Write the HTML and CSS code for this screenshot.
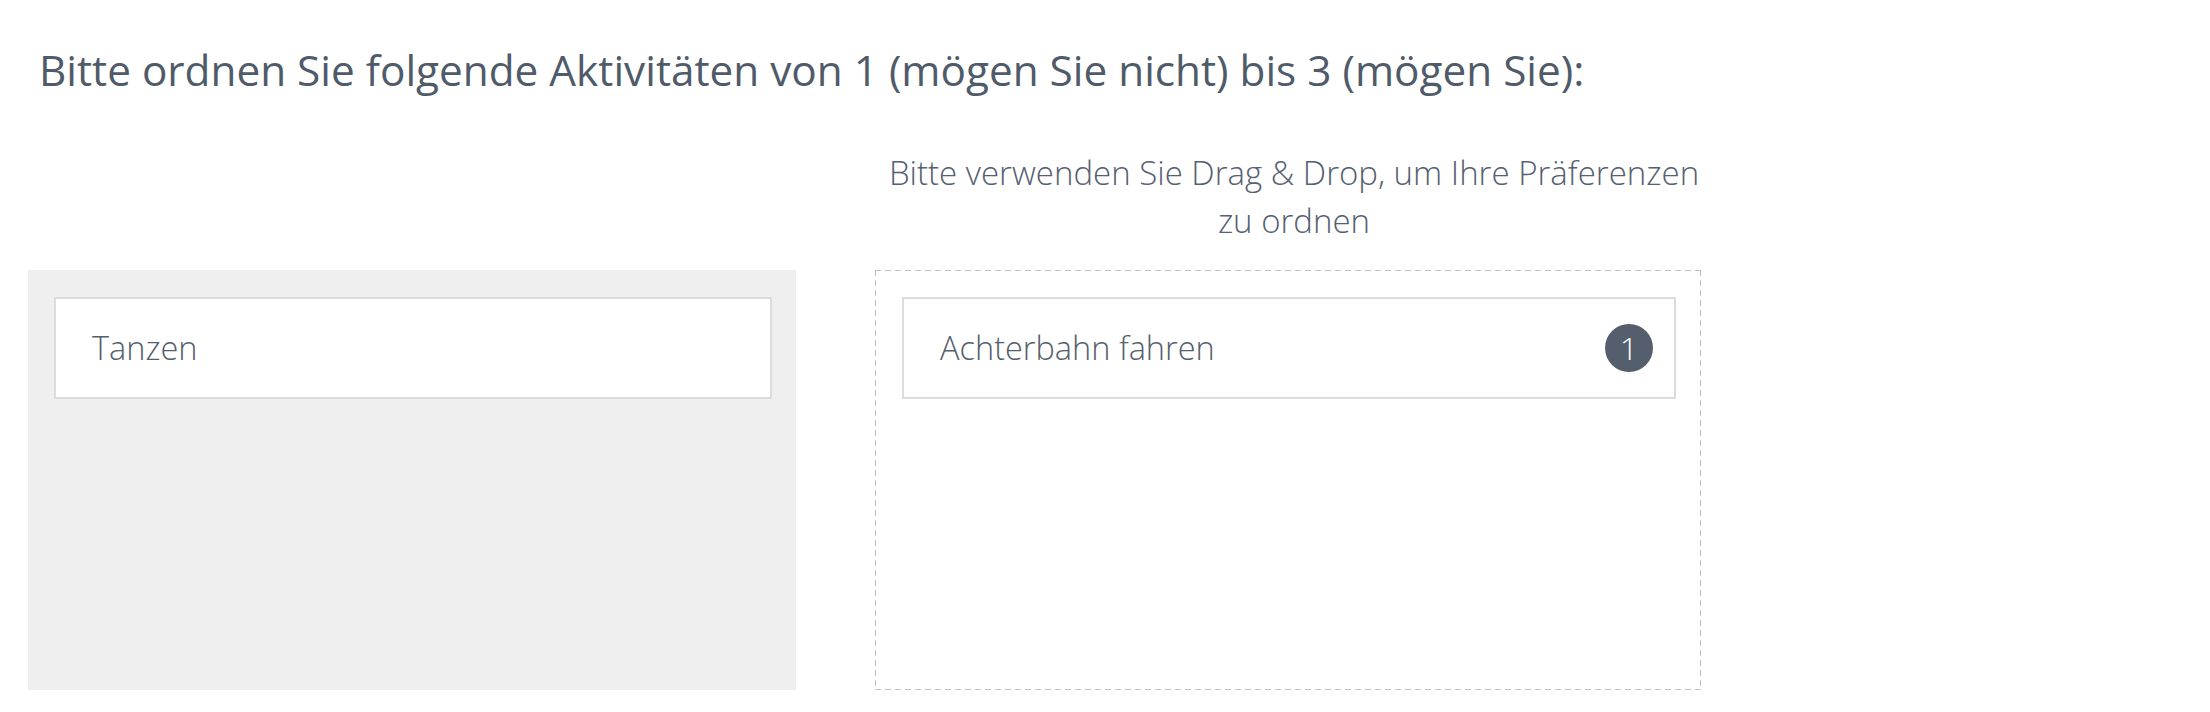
FILE: index.html
```html
<!DOCTYPE html>
<html lang="de">
<head>
<meta charset="utf-8">
<title>Ranking</title>
<link rel="stylesheet" href="styles.css">
</head>
<body>
<div class="page">
  <h1 class="question">Bitte ordnen Sie folgende Aktivitäten von 1 (mögen Sie nicht) bis 3 (mögen Sie):</h1>
  <div class="ranking">
    <div class="spacer"></div>
    <p class="hint">Bitte verwenden Sie Drag &amp; Drop, um Ihre Präferenzen zu ordnen</p>
    <div class="source">
      <div class="item"><span class="label">Tanzen</span></div>
    </div>
    <div class="target">
      <div class="item"><span class="label">Achterbahn fahren</span><span class="badge">1</span></div>
    </div>
  </div>
</div>
</body>
</html>
```

FILE: styles.css
```css
html, body {
  margin: 0;
  padding: 0;
  background: #ffffff;
}

body {
  font-family: "Open Sans", "Noto Sans", "Liberation Sans", sans-serif;
  color: #525c6b;
}

.page {
  padding: 0 28px;
}

.question {
  margin: 0;
  padding: 45px 0 0 11px;
  font-size: 42.3px;
  line-height: 50px;
  font-weight: 400;
  color: #505b6a;
}

.ranking {
  display: grid;
  grid-template-columns: 768px 826px;
  column-gap: 79px;
  margin-top: 54px;
}

.hint {
  margin: 0 0 25px;
  font-size: 33px;
  line-height: 48px;
  font-weight: 300;
  text-align: center;
  padding-left: 12px;
  color: #566071;
}

.source {
  background: #efefef;
  height: 420px;
  box-sizing: border-box;
  padding: 27px 24px 0 26px;
}

.target {
  height: 420px;
  box-sizing: border-box;
  padding: 27px 25px 0 27px;
  background:
    repeating-linear-gradient(90deg, #bfbfbf 0 6px, transparent 6px 10px) left top / 100% 1px no-repeat,
    repeating-linear-gradient(90deg, #bfbfbf 0 6px, transparent 6px 10px) left bottom / 100% 1px no-repeat,
    repeating-linear-gradient(180deg, #bfbfbf 0 6px, transparent 6px 10px) left top / 1px 100% no-repeat,
    repeating-linear-gradient(180deg, #bfbfbf 0 6px, transparent 6px 10px) right top / 1px 100% no-repeat;
}

.item {
  display: flex;
  align-items: center;
  justify-content: space-between;
  height: 102px;
  box-sizing: border-box;
  border: 2px solid #dcdcdc;
  background: #ffffff;
  padding: 0 21px 0 36px;
}

.label {
  font-size: 32.5px;
  line-height: 48px;
  font-weight: 300;
  color: #545e6d;
}

.badge {
  display: flex;
  align-items: center;
  justify-content: center;
  width: 48px;
  height: 48px;
  border-radius: 50%;
  background: #545e6c;
  color: #ffffff;
  font-size: 32px;
  font-weight: 300;
  line-height: 1;
}
```
